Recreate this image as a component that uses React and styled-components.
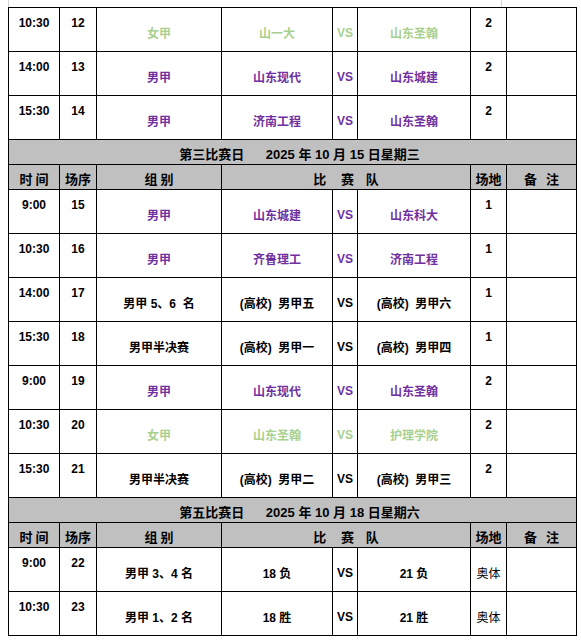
import React from "react";
import styled, { createGlobalStyle } from "styled-components";

const GlobalStyle = createGlobalStyle`
  body {
    margin: 0;
    background: #fff;
    font-family: "Liberation Sans", "Noto Sans CJK SC", Arial, sans-serif;
  }
`;

const Page = styled.div`
  padding: 0 0 0 8px;
`;

const GridStrip = styled.div`
  width: 494px;
  height: 7px;
  border-left: 1px solid #d4d4d4;
  border-right: 1px solid #d4d4d4;
  box-sizing: border-box;
`;

const Sheet = styled.table`
  border-collapse: collapse;
  table-layout: fixed;
  width: 568px;
  color: #000;
`;

const Row = styled.tr`
  height: ${(p) => p.$h}px;
`;

const Cell = styled.td`
  border: 1px solid #000;
  padding: 0;
  text-align: center;
  font-size: 12px;
  white-space: pre;
  overflow: hidden;
  font-family: "Liberation Sans", "Noto Sans CJK SC", sans-serif;
  color: ${(p) => p.$color || "#000"};
  vertical-align: ${(p) => (p.$top ? "top" : "middle")};
  padding-top: ${(p) => (p.$top ? "8px" : "6px")};
  font-weight: ${(p) => (p.$light ? 400 : 700)};
`;

const DayCell = styled.td`
  border: 1px solid #000;
  background: #c0c0c0;
  text-align: center;
  font-size: 13px;
  font-weight: 700;
  padding: 2px 0 0 14px;
  white-space: pre;
  font-family: "Liberation Sans", "Noto Sans CJK SC", sans-serif;
`;

const HeadCell = styled.td`
  border: 1px solid #000;
  background: #c0c0c0;
  text-align: center;
  font-size: 13px;
  font-weight: 700;
  padding: 3px 0 0 0;
  white-space: pre;
  font-family: "Noto Sans CJK SC", "Liberation Sans", sans-serif;
`;

const PURPLE = "#7030a0";
const GREEN = "#a9d08e";

const widths = [51, 37, 125, 111, 25, 113, 36, 70];

const sections = [
  {
    day: null,
    rows: [
      ["10:30", "12", "女甲", "山一大", "山东圣翰", "2", GREEN],
      ["14:00", "13", "男甲", "山东现代", "山东城建", "2", PURPLE],
      ["15:30", "14", "男甲", "济南工程", "山东圣翰", "2", PURPLE],
    ],
  },
  {
    day: "第三比赛日      2025 年 10 月 15 日星期三",
    rows: [
      ["9:00", "15", "男甲", "山东城建", "山东科大", "1", PURPLE],
      ["10:30", "16", "男甲", "齐鲁理工", "济南工程", "1", PURPLE],
      ["14:00", "17", "男甲 5、6  名", "(高校)  男甲五", "(高校)  男甲六", "1"],
      ["15:30", "18", "男甲半决赛", "(高校)  男甲一", "(高校)  男甲四", "1"],
      ["9:00", "19", "男甲", "山东现代", "山东圣翰", "2", PURPLE],
      ["10:30", "20", "女甲", "山东圣翰", "护理学院", "2", GREEN],
      ["15:30", "21", "男甲半决赛", "(高校)  男甲二", "(高校)  男甲三", "2"],
    ],
  },
  {
    day: "第五比赛日      2025 年 10 月 18 日星期六",
    rows: [
      ["9:00", "22", "男甲 3、4 名", "18 负", "21 负", "奥体", null, true],
      ["10:30", "23", "男甲 1、2 名", "18 胜", "21 胜", "奥体", null, true],
    ],
  },
];

const MatchRow = ({ r }) => {
  const [time, no, group, home, away, venue, color, venueMid] = r;
  return (
    <Row $h={44}>
      <Cell $top>{time}</Cell>
      <Cell $top>{no}</Cell>
      <Cell $color={color}>{group}</Cell>
      <Cell $color={color}>{home}</Cell>
      <Cell $color={color}>VS</Cell>
      <Cell $color={color}>{away}</Cell>
      {venueMid ? <Cell $light>{venue}</Cell> : <Cell $top>{venue}</Cell>}
      <Cell />
    </Row>
  );
};

export default function App() {
  return (
    <>
      <GlobalStyle />
      <Page>
        <GridStrip />
        <Sheet>
          <colgroup>
            {widths.map((w, i) => (
              <col key={i} style={{ width: w }} />
            ))}
          </colgroup>
          <tbody>
            {sections.map((s, si) => (
              <React.Fragment key={si}>
                {s.day && (
                  <>
                    <Row $h={25}>
                      <DayCell colSpan={8}>{s.day}</DayCell>
                    </Row>
                    <Row $h={25}>
                      <HeadCell>时 间</HeadCell>
                      <HeadCell>场序</HeadCell>
                      <HeadCell>组 别</HeadCell>
                      <HeadCell colSpan={3}>比     赛    队</HeadCell>
                      <HeadCell>场地</HeadCell>
                      <HeadCell>备   注</HeadCell>
                    </Row>
                  </>
                )}
                {s.rows.map((r, ri) => (
                  <MatchRow key={ri} r={r} />
                ))}
              </React.Fragment>
            ))}
          </tbody>
        </Sheet>
      </Page>
    </>
  );
}
